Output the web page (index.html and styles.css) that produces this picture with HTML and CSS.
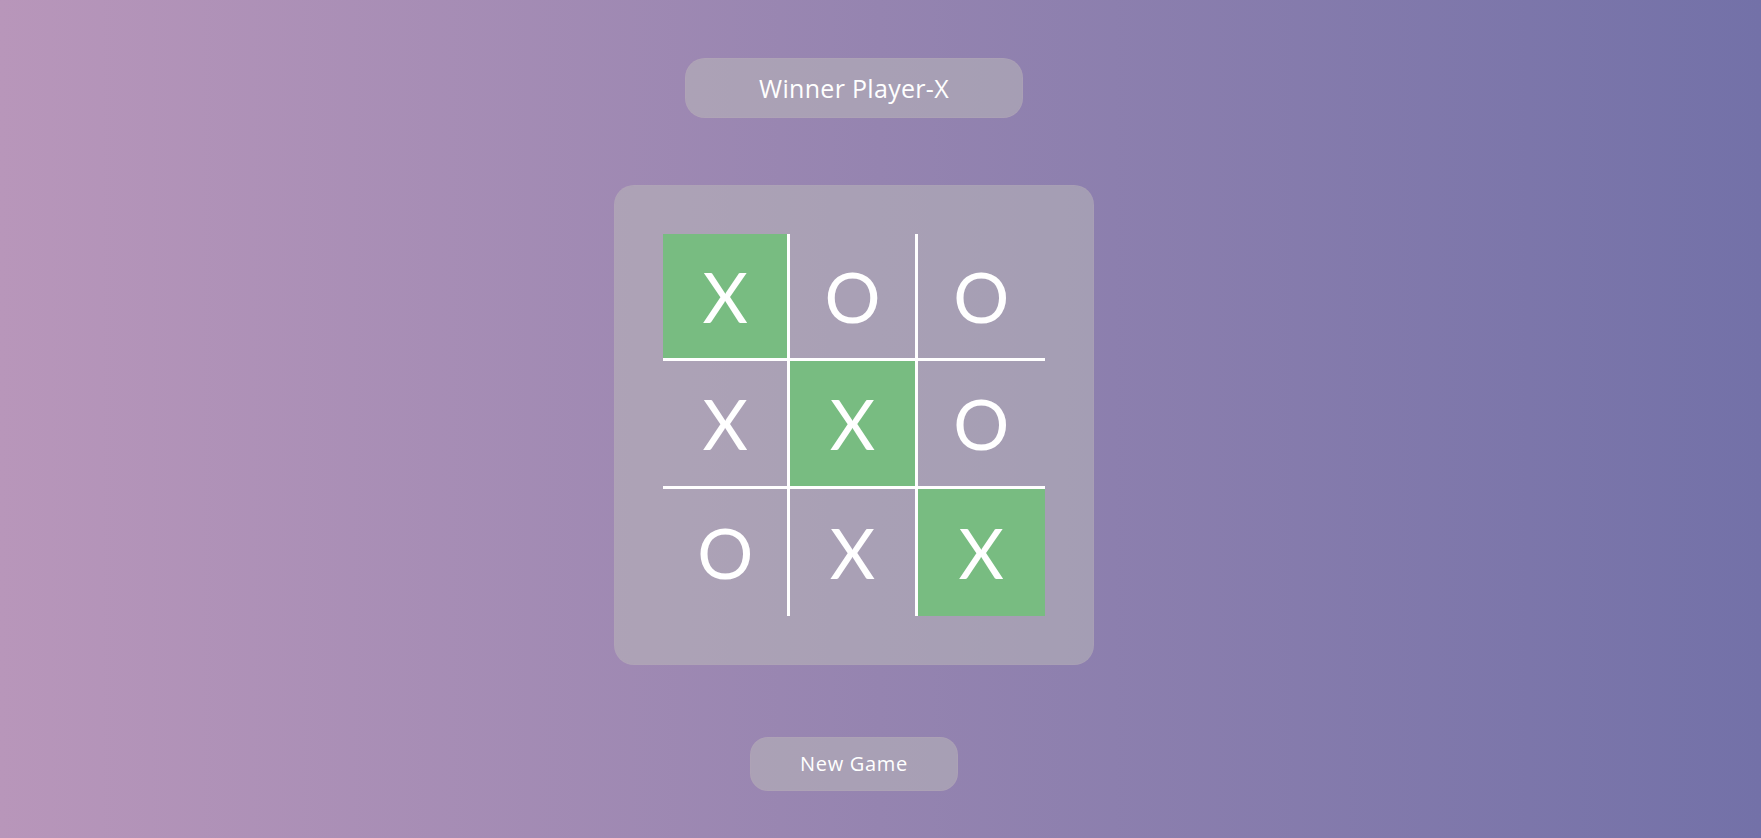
FILE: index.html
```html
<!DOCTYPE html>
<html lang="en">
<head>
<meta charset="utf-8">
<title>Tic Tac Toe</title>
<link rel="stylesheet" href="styles.css">
</head>
<body>
<main class="app">
  <div class="status">Winner Player-X</div>
  <div class="board">
    <div class="grid">
      <div class="cell br bb win">X</div>
      <div class="cell br bb">O</div>
      <div class="cell bb">O</div>
      <div class="cell br bb">X</div>
      <div class="cell br bb win">X</div>
      <div class="cell bb">O</div>
      <div class="cell br">O</div>
      <div class="cell br">X</div>
      <div class="cell win">X</div>
    </div>
  </div>
  <button class="new-game">New Game</button>
</main>
</body>
</html>
```
FILE: styles.css
```css
* { box-sizing: border-box; }
html, body { margin: 0; padding: 0; }
body {
  width: 1761px;
  height: 838px;
  overflow: hidden;
  background: linear-gradient(to right, #b896ba 0%, #9584b0 50%, #7371a8 100%);
  font-family: "Open Sans", "Lato", sans-serif;
  color: #fff;
}
.app {
  display: flex;
  flex-direction: column;
  align-items: center;
  padding: 58px 53px 0 0;
}
.status {
  width: 338px;
  height: 60px;
  border-radius: 20px;
  background: rgba(188, 188, 186, 0.5);
  border: 1px solid rgba(190, 170, 185, 0.2);
  display: flex;
  align-items: center;
  justify-content: center;
  font-size: 25px;
  letter-spacing: 0.3px;
  padding-bottom: 0;
}
.board {
  margin-top: 67px;
  width: 480px;
  height: 480px;
  border-radius: 20px;
  background: rgba(188, 188, 186, 0.5);
  border: 1px solid rgba(190, 170, 185, 0.15);
  padding: 48px;
}
.grid {
  width: 382px;
  height: 382px;
  display: grid;
  grid-template-columns: repeat(3, 1fr);
  grid-template-rows: repeat(3, 1fr);
}
.cell {
  display: flex;
  align-items: center;
  justify-content: center;
  font-family: "Lato", "Open Sans", sans-serif;
  font-size: 70px;
  line-height: 1;
  color: #fff;
}
.cell.br { border-right: 3px solid #fff; }
.cell.bb { border-bottom: 3px solid #fff; }
.cell.win { background: #78bc81; }
.new-game {
  margin-top: 72px;
  width: 208px;
  height: 54px;
  border-radius: 18px;
  background: rgba(188, 188, 186, 0.5);
  border: 1px solid rgba(190, 170, 185, 0.2);
  color: #fff;
  font-family: "Open Sans", "Lato", sans-serif;
  font-size: 20px;
  letter-spacing: 0.7px;
  cursor: pointer;
  padding-bottom: 2px;
}
```
